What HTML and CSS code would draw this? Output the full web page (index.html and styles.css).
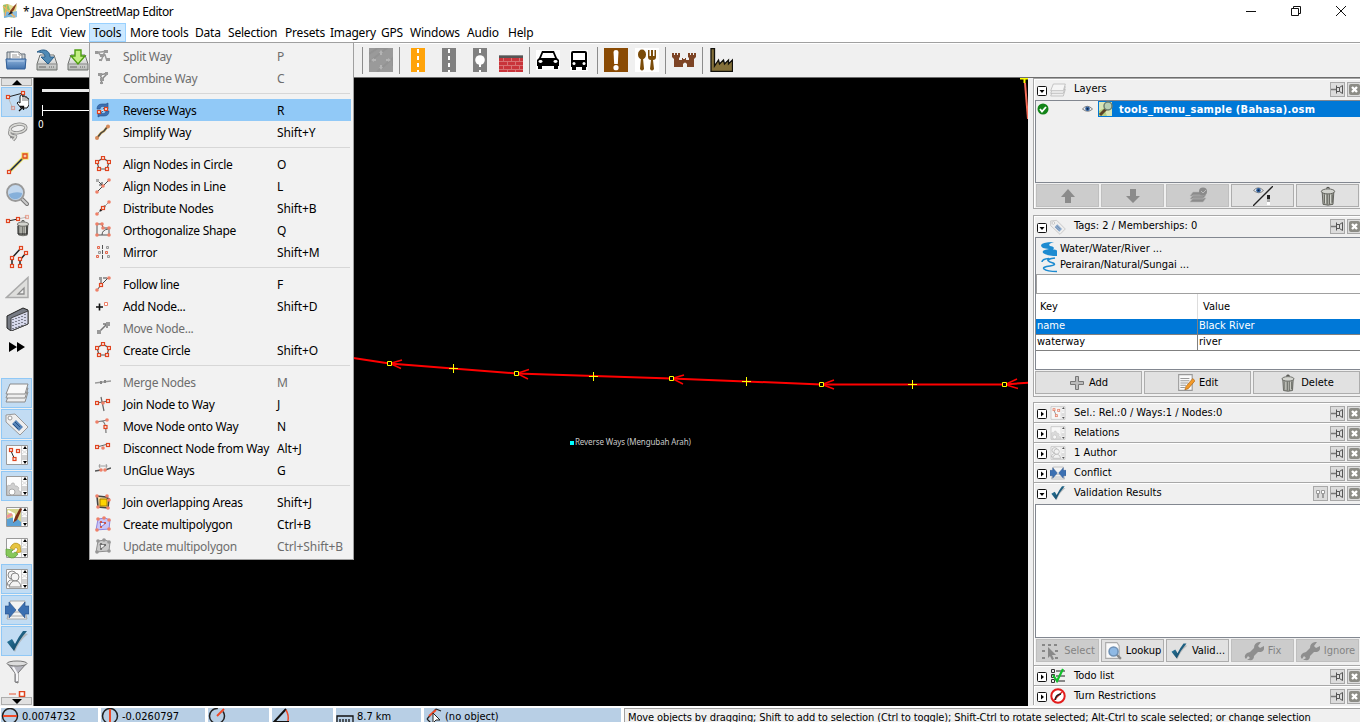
FILE: index.html
```html
<!DOCTYPE html>
<html lang="en">
<head>
<meta charset="utf-8">
<title>Java OpenStreetMap Editor</title>
<link rel="stylesheet" href="styles.css">
</head>
<body>
<svg class="defs" aria-hidden="true">
  <defs>
    <linearGradient id="steel" x1="0" y1="0" x2="0" y2="1"><stop offset="0" stop-color="#fafafa"/><stop offset="1" stop-color="#b4b7b4"/></linearGradient>
    <linearGradient id="folder" x1="0" y1="0" x2="0" y2="1"><stop offset="0" stop-color="#8fb3dc"/><stop offset="1" stop-color="#4272ad"/></linearGradient>
    <linearGradient id="check" x1="0" y1="0" x2="1" y2="1"><stop offset="0" stop-color="#2f86ad"/><stop offset="1" stop-color="#0b3450"/></linearGradient>
    <rect id="n" x="-1.5" y="-1.5" width="3" height="3" fill="#fbe9e4" stroke="#e0441f" stroke-width="1.2"/>
    <circle id="d" r="1.8" fill="#ee8068"/>
  </defs>
  <symbol id="josm" viewBox="0 0 16 16"><path d="M1 2l5-1 5 2 4-1-1 6 1 6-5 1-4-1-4 1z" fill="#e3dc94"/><path d="M1 2l5-1 2 6-6 3z" fill="#8dc36e"/><path d="M2 10l5-2 4 6-4 0-5 1z" fill="#77b3dc"/><path d="M10 9l5-1v6l-4 1z" fill="#8fbfe0"/><path d="M1 3l12 11M5 1l-2 12" stroke="#f3b15c" stroke-width="1.2"/><path d="M15 0l-3 7-3 3-1-2 4-5z" fill="#8a3d1c"/><path d="M9 8l-3 4 5-2z" fill="#22201e"/></symbol>
  <symbol id="open" viewBox="0 0 24 24"><path d="M3 4h7l2 2h9v14H3z" fill="#cfd2d4" stroke="#5e6a76"/><path d="M6 4h9l3 3v6H6z" fill="#fff" stroke="#7b8289"/><path d="M15 4v3h3M8 7h5M8 9h8" fill="none" stroke="#999"/><path d="M2 11h20l-1 10H3z" fill="url(#folder)" stroke="#315f98"/><path d="M4 13h16" stroke="#b6cfeb"/></symbol>
  <symbol id="disk" viewBox="0 0 24 24"><path d="M5 7h14l3 9v6H2v-6z" fill="url(#steel)" stroke="#6d706d"/><path d="M2 16h20" stroke="#888"/><path d="M4 19h7M14 19h1M16 19h1M18 19h1" stroke="#666"/></symbol>
  <symbol id="save" viewBox="0 0 24 24"><use href="#disk"/><path d="M2 4c6-4 13-2 13 5h4l-6 7-7-7h4c0-4-4-5-8-5z" fill="#4f8ab5" stroke="#285d88"/></symbol>
  <symbol id="download" viewBox="0 0 24 24"><use href="#disk"/><path d="M9 2h6v6h4l-7 8-7-8h4z" fill="#c4ef84" stroke="#4d9d10" stroke-width="1.4"/></symbol>
  <symbol id="grayroad" viewBox="0 0 24 24"><path fill="#9a9a9a" d="M0 0h24v24H0z"/><path d="M0 6l9-6h9L0 14M8 24L24 10v8" fill="none" stroke="#939393" stroke-width="2"/><path d="M12 2l2 3h-1v2h-2V5h-1zM12 22l2-3h-1v-2h-2v2h-1zM2 12l3-2v1h2v2H5v1zM22 12l-3-2v1h-2v2h2v1z" fill="#b4b4b4"/></symbol>
  <symbol id="motorway" viewBox="0 0 24 24"><path fill="#ffa30a" d="M5 0h14v24H5z"/><path d="M12 1v23" stroke="#fff" stroke-width="2" stroke-dasharray="4 3"/></symbol>
  <symbol id="road" viewBox="0 0 24 24"><path fill="#808080" d="M5 0h14v24H5z"/><path d="M12 1v23" stroke="#fff" stroke-width="2" stroke-dasharray="4 3"/></symbol>
  <symbol id="roadnode" viewBox="0 0 24 24"><use href="#road"/><circle cx="12" cy="12" r="4.8" fill="#fff"/></symbol>
  <symbol id="wall" viewBox="0 0 24 24"><path fill="#c9343a" d="M0 9h24v15H0z"/><path d="M0 7h24v3H0z" fill="#555"/><path d="M0 7.5h24" stroke="#888"/><path d="M0 13.5h24M0 17.5h24M0 21.500h24M4.500 10v3M12.500 10v3M20.500 10v3M8.500 14v3M16.500 14v3M4.500 18v3M12.500 18v3M20.500 18v3M8.500 22v2M16.500 22v2" stroke="#dc8280" stroke-width=".8"/></symbol>
  <symbol id="car" viewBox="0 0 24 24"><path fill="#fff" d="M0 2h24v20H0z"/><path d="M6 3h12l3 7 2 2v6h-1v3h-4v-3H6v3H2v-3H1v-6l2-2z"/><path d="M7 5h10l2 5H5z" fill="#fff"/><ellipse cx="4.500" cy="13.500" rx="2" ry="1.400" fill="#fff"/><ellipse cx="19.500" cy="13.500" rx="2" ry="1.400" fill="#fff"/></symbol>
  <symbol id="bus" viewBox="0 0 24 24"><path fill="#fff" d="M3 2h18v21H3z"/><path d="M6 3h12q2 0 2 2v14h-1v3h-4v-3H9v3H5v-3H4V5q0-2 2-2z"/><path d="M6 5h12v7H6z" fill="#fff"/><circle cx="7" cy="15.500" r="1.500" fill="#fff"/><circle cx="17" cy="15.500" r="1.500" fill="#fff"/></symbol>
  <symbol id="alert" viewBox="0 0 24 24"><path fill="#8a4b04" d="M0 0h24v24H0z"/><path d="M9.500 4q0-2 2.500-2t2.500 2L13.800 16h-3.600z" fill="#fff"/><circle cx="12" cy="19.700" r="2.600" fill="#fff"/></symbol>
  <symbol id="food" viewBox="0 0 24 24"><path fill="#fff" d="M0 0h24v24H0z"/><g fill="#7b4c0a"><ellipse cx="7" cy="6.500" rx="4" ry="5"/><path d="M6 10h2l1 11q-2 3-4 0z"/><path d="M13 2h1.500v6H16V2h2v6h1.500V2H21v7q0 3-3 3l1 9q-2 3-4 0l1-9q-3 0-3-3z"/></g></symbol>
  <symbol id="castle" viewBox="0 0 24 24"><path d="M0 5h2v2h1V5h2v2h1V5h2v4L7 10v2h3v-2h1v1h2v-1h1v2h3v-2l-1-1V5h2v2h1V5h2v2h1V5h2v4l-2 2v8h-7v-3q-2-3-4 0v3H2v-8L0 9z" fill="#7d4425"/></symbol>
  <symbol id="factory" viewBox="0 0 24 24"><path d="M2 .7h3.500V18l4-6 1 4 4-4 1 4 4-4v4l4-4v11.300H2z" fill="#84703a" stroke="#11100b" stroke-width="1.300"/></symbol>

  <symbol id="select" viewBox="0 0 24 24"><path d="M3 7l15-4" stroke="#222"/><path d="M3 7l5 12" stroke="#bbb"/><use href="#n" x="3" y="7"/><use href="#n" x="18" y="3"/><use href="#n" x="8" y="18" opacity=".4"/><path d="M15 7q0-2 1.500-2T18 7v-1q2-1 2 1 2-1 2 1 2 0 2 2v5l-2 3h-6l-4-5q1-2 3 0z" fill="#fff" stroke="#111"/><path d="M18 7v4M20 7v4M22 8v3" stroke="#444" stroke-width=".7"/><path d="M14 21l4-4m-3-.5h3.500V20" stroke="#111" stroke-width="1.300" fill="none"/></symbol>
  <symbol id="lasso" viewBox="0 0 24 24"><g fill="none" stroke="#888" stroke-width="3.200"><ellipse cx="13" cy="7.500" rx="8" ry="4.200" transform="rotate(-8 13 7.500)"/><path d="M5 10q-1 3 1 4t4 1-2 4M6 14l1 3"/></g><g fill="none" stroke="#d8d8d4" stroke-width="1.700"><ellipse cx="13" cy="7.500" rx="8" ry="4.200" transform="rotate(-8 13 7.500)"/><path d="M5 10q-1 3 1 4t4 1-2 4"/></g></symbol>
  <symbol id="draw" viewBox="0 0 24 24"><path d="M4 20L20 4" stroke="#eee04e" stroke-width="3.500" opacity=".8"/><path d="M4 20L20 4" stroke="#172348" stroke-width="1.600"/><path d="M16.500 .5h7v7h-7z" fill="#f2df4c"/><use href="#n" x="4" y="20"/><path d="M18 2h4v4h-4z" fill="#f8c7a2" stroke="#e04a22" stroke-width="1.300"/></symbol>
  <symbol id="zoomtool" viewBox="0 0 24 24"><path d="M16 15l6 6" stroke="#777" stroke-width="4" stroke-linecap="round"/><path d="M16 15l6 6" stroke="#ccc" stroke-width="2" stroke-linecap="round"/><circle cx="10.500" cy="9.500" r="8.500" fill="#c2d7ed" stroke="#999" stroke-width="1.800"/><path d="M4 11q7-3 13-1c0 8-13 8-13 1z" fill="#86b0da"/></symbol>
  <symbol id="trash" viewBox="0 0 24 24"><path d="M5 7h14l-1 15q-6 2-12 0z" fill="#a9aaa3" stroke="#4f504b"/><path d="M8 10v11M11 10v12M14 10v12M17 10v10" stroke="#4f504b"/><path d="M9 10v11M15 10v11" stroke="#e1e2dc"/><ellipse cx="12" cy="6.500" rx="8" ry="3" fill="#d3d4cf" stroke="#4f504b"/><path d="M10 3q2-3 4 0" fill="none" stroke="#4f504b" stroke-width="1.500"/></symbol>
  <symbol id="deltool" viewBox="0 0 24 24"><path d="M3 7l10-2" stroke="#222"/><path d="M13 5l9-2" stroke="#bbb"/><use href="#n" x="3" y="7"/><use href="#n" x="13" y="5"/><use href="#n" x="22" y="3" opacity=".4"/><svg x="9.500" y="5" width="17" height="18"><use href="#trash" width="17" height="18"/></svg><path d="M13 12v8h9v-8" fill="none" stroke="#222"/></symbol>
  <symbol id="parallel" viewBox="0 0 24 24"><path d="M7 21v-8l9-10M15 21v-6l6-7" stroke="#222" fill="none" stroke-width="1.500"/><use href="#n" x="7" y="21"/><use href="#n" x="7" y="13"/><use href="#n" x="16" y="3"/><use href="#n" x="15" y="21"/><use href="#n" x="15" y="14"/><use href="#n" x="21" y="8"/></symbol>
  <symbol id="triangle" viewBox="0 0 24 24"><path d="M23 1.500v20H1.500z" fill="#dededc" stroke="#aaa" stroke-width="1.500"/><path d="M19 12v6h-6z" fill="#f0f0f0" stroke="#8c8c8c" stroke-width="1.300"/></symbol>
  <symbol id="building" viewBox="0 0 24 24"><path d="M2 9L18 1l5 2v14L6 24l-4-3z" fill="#777b84" stroke="#222"/><path d="M6 11l17-7v13L6 24z" fill="#d6d8ea" stroke="#444"/><path d="M8 12v10M11 11v10M14 10v10M17 9v10M20 7v10" stroke="#34363e" stroke-width="1.100" stroke-dasharray="1 2"/></symbol>
  <symbol id="more" viewBox="0 0 24 24"><path d="M4 4l8 5-8 5zM12 4l8 5-8 5z"/></symbol>
  <symbol id="layers" viewBox="0 0 24 24"><g fill="#eee" stroke="#8b8b8b"><path d="M5 11h18l-3 10H1z"/><path d="M5 7h18l-3 10H1z"/><path d="M5 3h18l-3 10H1z" fill="#f8f8f8"/></g></symbol>
  <symbol id="tag" viewBox="0 0 24 24"><path d="M1 3l9-1 13 13-8 8L1 10z" fill="#eee" stroke="#999"/><circle cx="5" cy="6" r="2" fill="#fff" stroke="#999"/><path d="M11 8l7 7-4 4-7-7z" fill="#5684b8"/><path d="M10 10l5 5M8 12l5 5" stroke="#234f86"/></symbol>
  <symbol id="frame" viewBox="0 0 24 24"><path d="M1.500 2.500h21v19h-21z" fill="#fcfcfc" stroke="#9a9a9a"/><path d="M16.500 3v18" stroke="#ccc"/><path d="M17 12h5v5h-5z" fill="#d2d2d2"/><path d="M17 7l5 4m0-4l-5 4" stroke="#ddd"/><path d="M18 6l2-3 2 3zM18 18l2 3 2-3z"/></symbol>
  <symbol id="selection" viewBox="0 0 24 24"><use href="#frame"/><path d="M6 8l4 9" stroke="#222"/><use href="#n" x="6" y="7"/><use href="#n" x="13" y="8"/><use href="#n" x="9.500" y="16"/></symbol>
  <symbol id="relation" viewBox="0 0 24 24"><use href="#frame"/><path d="M2 12l2-1 1 1 2-3h2l1 3 2 0 2 2-1 2 3 2v3H2z" fill="#cfcfcf" stroke="#aaa" stroke-width=".6"/><circle cx="7" cy="18" r="3" fill="#fff" stroke="#aaa"/></symbol>
  <symbol id="mapstyle" viewBox="0 0 24 24"><use href="#frame"/><path d="M2 4h14v17H2z" fill="#d6d690"/><path d="M2 14l8-2 6 5v4H2z" fill="#5ba0d4"/><path d="M3 6l6 3v8" stroke="#fff" stroke-width="2" fill="none"/><path d="M2 12l5-3" stroke="#ef9494" stroke-width="3"/><path d="M17 4l-5 11-4 3 2-6 5-9z" fill="#793017"/></symbol>
  <symbol id="history" viewBox="0 0 24 24"><use href="#frame"/><path d="M5 12q4-8 10-3l1 7-5 1 2-4q-3-3-4 1z" fill="#e7c542" stroke="#b38d18" stroke-width=".7"/><path d="M13 18q-4 6-9 3l-3-2v-6l7 1-2 2q2 3 4 0z" fill="#86c85a" stroke="#579c30" stroke-width=".7"/></symbol>
  <symbol id="users" viewBox="0 0 24 24"><use href="#frame"/><g fill="#f4f4f4" stroke="#888"><circle cx="7" cy="8" r="4"/><path d="M2 18q1-6 6-5l4 5z"/><circle cx="10" cy="10" r="4"/><path d="M4 20q2-7 7-6 4 0 5 6z"/></g></symbol>
  <symbol id="conflict" viewBox="0 0 24 24"><path d="M5 3h15l-1 6 3 12H2l3-12z" fill="#f3f3f3" stroke="#aaa"/><path d="M5 14h14M4 18h16" stroke="#aaa"/><path d="M0 8h4V4l7 8-7 8v-4H0zM24 8h-4V4l-7 8 7 8v-4h4z" fill="#3c70b2" stroke="#274f87" stroke-width=".6"/></symbol>
  <symbol id="valid" viewBox="0 0 24 24"><path d="M4 15l6 8q4-11 13-18l-4-1q-6 5-9 12l-2-5z" fill="#aaa" opacity=".7"/><path d="M2 13l5-3 3 5Q14 7 18 2h4Q14 11 9 22z" fill="url(#check)"/></symbol>
  <symbol id="filter" viewBox="0 0 24 24"><path d="M3 4l7 9v9l3 1V13l8-9z" fill="#b7b7c0" stroke="#777"/><path d="M8 7l4 7v7" stroke="#f7f7f9" stroke-width="2" fill="none"/><ellipse cx="12" cy="3.500" rx="10" ry="2.500" fill="#ddd" stroke="#777"/></symbol>
  <symbol id="partial" viewBox="0 0 24 24"><path d="M4 3h7" stroke="#e88a75" stroke-width="1.500"/><path d="M14.500 .5h5v5h-5z" fill="#fff" stroke="#e0441f" stroke-width="1.500"/></symbol>

  <symbol id="m-split" viewBox="0 0 16 16"><path d="M1 4h5l6-1M3 4l3 4 4-1 2 6M10 3L6 13" stroke="#999" stroke-width="1.500" fill="none"/><path d="M0 3h3v3H0zM9 2h4v3H9zM5 6h4v3H5zM11 10h4v3h-4zM4 11h3v2H4z" fill="#999"/></symbol>
  <symbol id="m-combine" viewBox="0 0 16 16"><path d="M4 5l5-1 4-1M5 5l2 4-1 5M12 4L7 9" stroke="#888" stroke-width="1.500" fill="none"/><path d="M3 3h4v3H3zM10 2h3v3h-3zM5 8h4v3H5zM5 12h3v2H5z" fill="#999"/></symbol>
  <symbol id="m-reverse" viewBox="0 0 16 16"><path d="M2 7q0-5 5-5h4l2-1v6H8l2-2q-4-2-5 2zM14 9q0 5-5 5H5l-2 1V9h5l-2 2q4 2 5-2z" fill="#3c70b2" stroke="#274f87" stroke-width=".6"/><path d="M4 10l7-3" stroke="#eee"/><use href="#n" x="4" y="10"/><use href="#n" x="11" y="7"/></symbol>
  <symbol id="m-simplify" viewBox="0 0 16 16"><path d="M2 14L6 9l3-2 4-5" stroke="#e0b45e" stroke-width="2.400" fill="none"/><path d="M2 14L6 9l3-2 4-5" stroke="#444" stroke-width="1.500" fill="none"/><circle cx="2" cy="14" r="2" fill="#d68b5c"/><circle cx="13" cy="2.500" r="2" fill="#d68b5c"/></symbol>
  <symbol id="m-circle" viewBox="0 0 16 16"><path d="M8 2l6 4-2 7H4L2 6z" fill="none" stroke="#555" stroke-width="1.200"/><use href="#n" x="8" y="2"/><use href="#n" x="14" y="6"/><use href="#n" x="12" y="13"/><use href="#n" x="4" y="13"/><use href="#n" x="2" y="6"/></symbol>
  <symbol id="m-line" viewBox="0 0 16 16"><path d="M2 14L14 2M3 3l4 4M7 4v3H4" stroke="#444" fill="none"/><path d="M1 1h3v3H1z" fill="#aaa"/><use href="#d" x="2" y="14"/><use href="#d" x="8" y="8"/><use href="#d" x="14" y="2"/></symbol>
  <symbol id="m-dist" viewBox="0 0 16 16"><path d="M2 14L14 2" stroke="#999"/><path d="M5 11l5-5" stroke="#222" stroke-width="2"/><use href="#d" x="2" y="14"/><use href="#n" x="8" y="8"/><use href="#d" x="14" y="2"/></symbol>
  <symbol id="m-ortho" viewBox="0 0 16 16"><path d="M2 1v12h12V6H8L7 2H2M7 13q0-5 6-6" stroke="#555" fill="none"/><use href="#d" x="2" y="2"/><use href="#d" x="7" y="2"/><use href="#d" x="8" y="6"/><use href="#d" x="14" y="6"/><use href="#d" x="14" y="13"/><use href="#d" x="2" y="13"/></symbol>
  <symbol id="m-mirror" viewBox="0 0 16 16"><path d="M7.500 1v14" stroke="#555" stroke-dasharray="4 1"/><g fill="#ddd" stroke-width="1"><path d="M2.500 2.500h2v2h-2zM1.500 11.500h2v2h-2zM10.500 7.500h2v2h-2z" stroke="#e7654a"/><path d="M11.500 2.500h2v2h-2zM3.500 7.500h2v2h-2zM12.500 11.500h2v2h-2z" stroke="#999"/></g></symbol>
  <symbol id="m-follow" viewBox="0 0 16 16"><path d="M2 14l4-5V2M6 9l7-7M8 2h4" stroke="#444" fill="none"/><path d="M4 1h3v3H4z" fill="#999"/><use href="#d" x="2" y="14"/><use href="#n" x="6" y="9"/><use href="#d" x="14" y="2"/></symbol>
  <symbol id="m-add" viewBox="0 0 16 16"><path d="M1 9h7M4.500 5.500v7" stroke="#111" stroke-width="1.600"/><path d="M9.500 4.500h3v3h-3z" fill="#fff" stroke="#ee8068"/></symbol>
  <symbol id="m-move" viewBox="0 0 16 16"><path d="M4 12l7-7M8 4h4v4" stroke="#777" stroke-width="1.500" fill="none"/><path d="M2 10h4v4H2zM11 2h4v4h-4z" fill="#999"/></symbol>
  <symbol id="m-merge" viewBox="0 0 16 16"><path d="M0 9l16-2" stroke="#999" stroke-width="1.400"/><path d="M5 7h2v3H5zM9 6h2v3H9z" fill="#888"/></symbol>
  <symbol id="m-join" viewBox="0 0 16 16"><path d="M2 7l11-2M6 1l3 14" stroke="#666" stroke-width="1.200"/><use href="#d" x="8" y="7"/><use href="#n" x="2" y="7"/><use href="#n" x="13" y="5"/></symbol>
  <symbol id="m-onto" viewBox="0 0 16 16"><path d="M1 4l12-2M7 3q4 1 4 12" stroke="#777" stroke-width="1.200" fill="none"/><use href="#d" x="2" y="4"/><use href="#d" x="12" y="2"/><use href="#n" x="10.500" y="9"/></symbol>
  <symbol id="m-disc" viewBox="0 0 16 16"><path d="M2 7l11-3" stroke="#666"/><use href="#n" x="2" y="7"/><use href="#d" x="8" y="8"/><use href="#n" x="13" y="5"/></symbol>
  <symbol id="m-unglue" viewBox="0 0 16 16"><path d="M0 9l6-1M10 8l6-2" stroke="#555" stroke-width="1.400"/><path d="M4 4h8M5 2L4 4l1 2M11 2l1 2-1 2" stroke="#888" fill="none" stroke-width=".8"/><use href="#d" x="6" y="8"/><use href="#d" x="10" y="8"/></symbol>
  <symbol id="m-overlap" viewBox="0 0 16 16"><path d="M2 2l9 1 3 2-1 9-10-1z" fill="#f2d9a4" stroke="#444" stroke-width="1.600"/><path d="M5 5h7v7H5z" fill="#ffd400" stroke="#a67b00"/><use href="#d" x="2" y="2"/><use href="#d" x="12" y="2"/><use href="#d" x="14" y="6"/><use href="#d" x="13" y="14"/><use href="#d" x="3" y="13"/></symbol>
  <symbol id="m-multi" viewBox="0 0 16 16"><path d="M3 3l7-1 5 2-1 9-13 1z" fill="#c9c4f5" stroke="#8f86e0"/><path d="M5 6l6 1-5 4z" fill="#efeeff" stroke="#776ec8"/><use href="#d" x="3" y="3"/><use href="#d" x="9" y="2"/><use href="#d" x="14" y="4"/><use href="#d" x="14" y="13"/><use href="#d" x="2" y="14"/><g fill="#e0441f"><circle cx="6" cy="6" r="1"/><circle cx="10" cy="7" r="1"/><circle cx="6" cy="11" r="1"/></g></symbol>

  <symbol id="pin" viewBox="0 0 13 13"><path d="M0 6.500h5" stroke="#777" stroke-width="1.500"/><path d="M5.500 2.500v8M5.500 4.500h3v4h-3M8.500 4.500l3-2v8l-3-2" fill="#ddd" stroke="#555"/></symbol>
  <symbol id="close" viewBox="0 0 13 13"><rect x="1" y="1" width="11" height="11" rx="2" fill="#8c8c86"/><path d="M4 4l5 5m0-5l-5 5" stroke="#fff" stroke-width="2.400"/></symbol>
  <symbol id="unfold" viewBox="0 0 12 12"><rect x="1.500" y="1.500" width="9" height="9" rx="1" fill="#fff" stroke="#111"/><path d="M3.500 5h5L6 8z"/></symbol>
  <symbol id="fold" viewBox="0 0 12 12"><rect x="1.500" y="1.500" width="9" height="9" rx="1" fill="#fff" stroke="#111"/><path d="M5 3.500v5L8 6z"/></symbol>
  <symbol id="eye" viewBox="0 0 12 10"><path d="M.5 5q5-6 11 0-5 5-11 0z" fill="#e7edf4" stroke="#777"/><circle cx="6" cy="4.800" r="2.500" fill="#2f5f9e"/><circle cx="6" cy="4.800" r="1" fill="#0b1f3c"/></symbol>
  <symbol id="ok" viewBox="0 0 12 12"><circle cx="6" cy="6" r="5.500" fill="#128418"/><path d="M3 6l2 2.500L9 4" stroke="#fff" stroke-width="1.800" fill="none"/></symbol>
  <symbol id="osmlayer" viewBox="0 0 16 16"><path d="M1 1h13v14H1z" fill="#d9e5b5"/><path d="M1 10l5-3 3 8H1z" fill="#b5cf82"/><path d="M8 8l-6 6" stroke="#5c4527" stroke-width="3"/><circle cx="10" cy="5" r="4" fill="#b7cfb5" stroke="#6d7f70" stroke-width="1.500"/></symbol>
  <symbol id="up" viewBox="0 0 16 16"><path d="M8 1l7 8h-4v6H5V9H1z" fill="#8b8b8b"/></symbol>
  <symbol id="down" viewBox="0 0 16 16"><path d="M8 15L1 8h4V1h6v7h4z" fill="#8b8b8b"/></symbol>
  <symbol id="merge" viewBox="0 0 20 18"><path d="M5 11h13l-3 4H2zM5 8h13l-3 4H2zM5 5h13l-3 4H2z" fill="#8b8b8b" stroke="#b5b5b5" stroke-width=".6"/><circle cx="15" cy="4.500" r="4" fill="#8b8b8b"/><path d="M13 4l2 2 3-3" fill="none" stroke="#bbb"/></symbol>
  <symbol id="opacity" viewBox="0 0 20 20"><path d="M0 20L20 0" stroke="#222" stroke-width="1.300"/><svg x="0" y="0" width="11" height="9"><use href="#eye"/></svg><path d="M14 9h3v4h-3z" fill="#222"/><path d="M14 13h3v3h-3z" fill="#aaa"/><path d="M14 16h3v3h-3z" fill="#fff"/></symbol>
  <symbol id="riverfull" viewBox="0 0 16 16"><path d="M13 1Q0 1 0 4.500Q0 7.500 8 8Q0 9 2 12Q6 15 16 15V9.500Q14 8 12 8.500Q15 6 9 5Q6 3 13 1z" fill="#1d8bd1"/></symbol>
  <symbol id="riverline" viewBox="0 0 16 16"><path d="M14 1Q6 2 7 3.500Q8 5 12 6Q16 8 9 9Q1 10 3 12Q6 14.500 16 14.500M8 1.500Q1 2 1 5" fill="none" stroke="#1d8bd1" stroke-width="1.600"/></symbol>
  <symbol id="plus" viewBox="0 0 16 16"><path d="M6.500 1.500h3v5h5v3h-5v5h-3v-5h-5v-3h5z" fill="#bbb" stroke="#777"/></symbol>
  <symbol id="edit" viewBox="0 0 16 16"><path d="M1.500 .5h12v14h-12z" fill="#fafafa" stroke="#999"/><path d="M3 4h8M3 6h8M3 8h7M3 10h5M3 12h4" stroke="#999"/><path d="M14 4l2 2-6 7-3 1 1-3z" fill="#f39b2a" stroke="#a86010" stroke-width=".6"/></symbol>
  <symbol id="prefs" viewBox="0 0 13 13"><path d="M2.500 3.500h3v3h-3zM7.500 3.500h3v3h-3z" fill="#fff" stroke="#999"/><path d="M4 7v4M9 7v4" stroke="#888" stroke-width="1.500"/></symbol>
  <symbol id="pick" viewBox="0 0 20 18"><path d="M2 3h3M8 3h3M14 3h3M2 9h3M2 16h3M15 16h3M15 9h3" stroke="#888" stroke-width="2" fill="none"/><path d="M8 5l8 8-4 0 2 4-2 1-2-4-2 2z" fill="#888"/></symbol>
  <symbol id="lookup" viewBox="0 0 16 16"><path d="M1.500.5h10l2 3v11h-12z" fill="#fafafa" stroke="#aaa"/><path d="M11 11l4 4" stroke="#888" stroke-width="2"/><circle cx="8.500" cy="8.500" r="4" fill="#8fb9e4" stroke="#6f91b5" stroke-width="1.400"/></symbol>
  <symbol id="wrench" viewBox="0 0 20 20"><path d="M2 18q-3-3 1-6l3-1 4-4q0-5 5-6l2 0-3 4 2 2 4-2q1 5-3 6h-3l-4 4q0 5-5 4h-2l3-2-2-2z" fill="#8e8e8e"/></symbol>
  <symbol id="todo" viewBox="0 0 16 16"><path d="M1.500 1.500h3v3h-3zM1.500 6.500h3v3h-3zM1.500 11.500h3v3h-3z" fill="#eee" stroke="#333"/><path d="M6 3h9M6 8h9M6 13h9" stroke="#666" stroke-width="1.500"/><path d="M3 7l4 6 6-12" stroke="#12c02c" stroke-width="2.200" fill="none"/></symbol>
  <symbol id="turn" viewBox="0 0 16 16"><circle cx="8" cy="8" r="6.700" fill="#fff" stroke="#e31c1c" stroke-width="2"/><path d="M4 12l8-8" stroke="#e31c1c" stroke-width="1.500"/><path d="M5.500 12Q5 7 11 6" stroke="#222" stroke-width="1.400" fill="none"/></symbol>
</svg>

<header class="titlebar">
  <svg class="i16"><use href="#josm"/></svg><span class="title">* Java OpenStreetMap Editor</span>
  <svg class="wctl" viewBox="0 0 110 20"><g fill="none" stroke="#111"><path d="M6 10.500h10M51.500 7.500h7v7h-7zM53.500 7.500v-2h7v7h-2M96 5l10 10M106 5L96 15"/></g></svg>
</header>
<nav class="menubar">
  <span>File</span><span>Edit</span><span>View</span><span class="active">Tools</span><span>More tools</span><span>Data</span><span>Selection</span><span>Presets</span><span>Imagery</span><span>GPS</span><span>Windows</span><span>Audio</span><span>Help</span>
</nav>
<div class="toolbar">
  <div class="tgroup files"><svg><use href="#open"/></svg><svg><use href="#save"/></svg><svg><use href="#download"/></svg></div>
  <div class="tgroup"><svg><use href="#grayroad"/></svg></div>
  <div class="tgroup"><svg><use href="#motorway"/></svg><svg><use href="#road"/></svg><svg><use href="#roadnode"/></svg><svg><use href="#wall"/></svg></div>
  <div class="tgroup"><svg><use href="#car"/></svg><svg><use href="#bus"/></svg></div>
  <div class="tgroup"><svg><use href="#alert"/></svg><svg><use href="#food"/></svg></div>
  <div class="tgroup"><svg><use href="#castle"/></svg></div>
  <div class="tgroup"><svg><use href="#factory"/></svg></div>
</div>

<main class="work">
  <aside class="side">
    <div class="scroll"><svg viewBox="0 0 10 5"><path d="M5 0l5 5H0z"/></svg></div>
    <div class="tools">
      <i class="on"><svg><use href="#select"/></svg></i><i><svg><use href="#lasso"/></svg></i><i><svg><use href="#draw"/></svg></i><i><svg><use href="#zoomtool"/></svg></i><i><svg><use href="#deltool"/></svg></i><i><svg><use href="#parallel"/></svg></i><i><svg><use href="#triangle"/></svg></i><i><svg><use href="#building"/></svg></i><i><svg><use href="#more"/></svg></i>
    </div>
    <div class="tools dialogs">
      <i class="on"><svg><use href="#layers"/></svg></i><i class="on"><svg><use href="#tag"/></svg></i><i class="on"><svg><use href="#selection"/></svg></i><i class="on"><svg><use href="#relation"/></svg></i><i><svg><use href="#mapstyle"/></svg></i><i><svg><use href="#history"/></svg></i><i class="on"><svg><use href="#users"/></svg></i><i class="on"><svg><use href="#conflict"/></svg></i><i class="on"><svg><use href="#valid"/></svg></i><i><svg><use href="#filter"/></svg></i><i><svg><use href="#partial"/></svg></i>
    </div>
    <div class="scroll"><svg viewBox="0 0 10 5"><path d="M5 5l5-5H0z"/></svg></div>
  </aside>

  <svg class="map" viewBox="34 78 994 628">
    <path d="M42 90.500h60" stroke="#e9e9e9" stroke-width="3"/>
    <path d="M42.500 105v11M42 110.500h60" stroke="#fff"/>
    <text x="38" y="128" class="scale">0</text>
    <path d="M350 357.500L389.500 363.500 516.500 373.500 671.500 378.500 821.500 384.500H1004.500L1030 382.500" fill="none" stroke="#f00" stroke-width="2"/>
    <g fill="none" stroke="#f00" stroke-width="1.500">
      <path d="M402 360l-12 3.500 11 5M529 369.500l-12 4 11 5.500M684 375l-12 3.500 11 5.500M834 380l-12 4.500 12 4.500M1017 379l-12 5.500 13 4"/>
    </g>
    <g fill="#000" stroke="#ff0">
      <path d="M387.500 361.500h4v4h-4zM514.500 371.500h4v4h-4zM669.500 376.500h4v4h-4zM819.500 382.500h4v4h-4zM1002.500 382.500h4v4h-4z"/>
      <path d="M449 368.500h9M453.500 364v9M589 376.500h9M593.500 372v9M742 381.500h9M746.500 377v9M908 384.500h9M912.500 380v9"/>
      <path d="M1020 78.500h8M1024.500 78v5" stroke-width="2"/>
    </g>
    <path d="M1025 83l3 36" stroke="#f56d58" stroke-width="2"/>
    <path d="M570 441h4v4h-4z" fill="#0ff"/>
    <text x="575" y="445" class="label" textLength="116">Reverse Ways (Mengubah Arah)</text>
  </svg>

  <aside class="panels">
    <section class="panel layers">
      <header><svg class="tg"><use href="#unfold"/></svg><svg class="i16 dim"><use href="#layers"/></svg><b>Layers</b><svg class="hb"><use href="#pin"/></svg><svg class="hb"><use href="#close"/></svg></header>
      <div class="list">
        <div class="layer"><svg class="okic"><use href="#ok"/></svg><svg class="eyeic"><use href="#eye"/></svg><div class="lname"><svg class="i16"><use href="#osmlayer"/></svg><span>tools_menu_sample (Bahasa).osm</span></div></div>
      </div>
      <div class="btns five"><button class="off"><svg class="i16"><use href="#up"/></svg></button><button class="off"><svg class="i16"><use href="#down"/></svg></button><button class="off"><svg class="i20"><use href="#merge"/></svg></button><button><svg class="i20"><use href="#opacity"/></svg></button><button><svg class="i20"><use href="#trash"/></svg></button></div>
    </section>

    <section class="panel tags">
      <header><svg class="tg"><use href="#unfold"/></svg><svg class="i16 dim"><use href="#tag"/></svg><b>Tags: 2 / Memberships: 0</b><svg class="hb"><use href="#pin"/></svg><svg class="hb"><use href="#close"/></svg></header>
      <div class="tagbox">
        <div class="preset"><svg class="i16"><use href="#riverfull"/></svg><span>Water/Water/River ...</span></div>
        <div class="preset"><svg class="i16"><use href="#riverline"/></svg><span>Perairan/Natural/Sungai ...</span></div>
        <div class="filter"></div>
        <div class="row head"><span>Key</span><span>Value</span></div>
        <div class="row sel"><span>name</span><span>Black River</span></div>
        <div class="row"><span>waterway</span><span>river</span></div>
      </div>
      <div class="btns three"><button><svg class="i16"><use href="#plus"/></svg>Add</button><button><svg class="i18"><use href="#edit"/></svg>Edit</button><button><svg class="i18"><use href="#trash"/></svg>Delete</button></div>
    </section>

    <div class="stack">
      <section class="panel"><header><svg class="tg"><use href="#fold"/></svg><svg class="i16 dim"><use href="#selection"/></svg><b>Sel.: Rel.:0 / Ways:1 / Nodes:0</b><svg class="hb"><use href="#pin"/></svg><svg class="hb"><use href="#close"/></svg></header></section>
      <section class="panel"><header><svg class="tg"><use href="#fold"/></svg><svg class="i16 dim"><use href="#relation"/></svg><b>Relations</b><svg class="hb"><use href="#pin"/></svg><svg class="hb"><use href="#close"/></svg></header></section>
      <section class="panel"><header><svg class="tg"><use href="#fold"/></svg><svg class="i16 dim"><use href="#users"/></svg><b>1 Author</b><svg class="hb"><use href="#pin"/></svg><svg class="hb"><use href="#close"/></svg></header></section>
      <section class="panel"><header><svg class="tg"><use href="#fold"/></svg><svg class="i16"><use href="#conflict"/></svg><b>Conflict</b><svg class="hb"><use href="#pin"/></svg><svg class="hb"><use href="#close"/></svg></header></section>
      <section class="panel validation">
        <header><svg class="tg"><use href="#unfold"/></svg><svg class="i16"><use href="#valid"/></svg><b>Validation Results</b><svg class="hb"><use href="#prefs"/></svg><svg class="hb"><use href="#pin"/></svg><svg class="hb"><use href="#close"/></svg></header>
        <div class="results"></div>
        <div class="btns five"><button class="off"><svg class="i20"><use href="#pick"/></svg>Select</button><button><svg class="i18"><use href="#lookup"/></svg>Lookup</button><button><svg class="i18"><use href="#valid"/></svg>Valid...</button><button class="off"><svg class="i20"><use href="#wrench"/></svg>Fix</button><button class="off"><svg class="i20"><use href="#wrench"/></svg>Ignore</button></div>
      </section>
      <section class="panel"><header><svg class="tg"><use href="#fold"/></svg><svg class="i16"><use href="#todo"/></svg><b>Todo list</b><svg class="hb"><use href="#pin"/></svg><svg class="hb"><use href="#close"/></svg></header></section>
      <section class="panel"><header><svg class="tg"><use href="#fold"/></svg><svg class="i16"><use href="#turn"/></svg><b>Turn Restrictions</b><svg class="hb"><use href="#pin"/></svg><svg class="hb"><use href="#close"/></svg></header></section>
    </div>
  </aside>
</main>

<footer class="status">
  <span><svg viewBox="0 0 18 16"><circle cx="9" cy="9" r="7.500" fill="none" stroke="#222" stroke-width="1.500"/><path d="M2 9h14" stroke="#f04a28" stroke-width="2"/></svg>0.0074732</span>
  <span><svg viewBox="0 0 18 16"><circle cx="9" cy="9" r="7.500" fill="none" stroke="#222" stroke-width="1.500"/><path d="M9 2v14" stroke="#f04a28" stroke-width="2"/></svg>-0.0260797</span>
  <span><svg viewBox="0 0 18 16"><circle cx="9" cy="9" r="7.500" fill="none" stroke="#222" stroke-width="1.500" stroke-dasharray="36 6"/><path d="M9 9l7-7" stroke="#f04a28" stroke-width="2"/></svg></span>
  <span><svg viewBox="0 0 18 16"><path d="M14 2L2 15h15" fill="none" stroke="#111" stroke-width="2"/><path d="M14 3q3 5 2 11" fill="none" stroke="#f04a28" stroke-width="1.500"/></svg></span>
  <span><svg viewBox="0 0 18 16"><path d="M1 16V9h16v7M4 12v4M7 12v4M10 12v4M13 12v4" fill="none" stroke="#111" stroke-width="1.300"/></svg>8.7 km</span>
  <span><svg viewBox="0 0 18 16"><path d="M3 12l9-10M3 12l6 6M12 2l5 2" fill="none" stroke="#222" stroke-width="1.200"/><path d="M5 9l7-6" stroke="#f04a28" stroke-width="2"/><path d="M9 6v10l3-3h4z" fill="#fff" stroke="#222"/></svg>(no object)</span>
  <em>Move objects by dragging; Shift to add to selection (Ctrl to toggle); Shift-Ctrl to rotate selected; Alt-Ctrl to scale selected; or change selection</em>
</footer>

<ul class="popup">
  <li class="off"><svg><use href="#m-split"/></svg><span>Split Way</span><kbd>P</kbd></li>
  <li class="off"><svg><use href="#m-combine"/></svg><span>Combine Way</span><kbd>C</kbd></li>
  <li class="sep"></li>
  <li class="hot"><svg><use href="#m-reverse"/></svg><span>Reverse Ways</span><kbd>R</kbd></li>
  <li><svg><use href="#m-simplify"/></svg><span>Simplify Way</span><kbd>Shift+Y</kbd></li>
  <li class="sep"></li>
  <li><svg><use href="#m-circle"/></svg><span>Align Nodes in Circle</span><kbd>O</kbd></li>
  <li><svg><use href="#m-line"/></svg><span>Align Nodes in Line</span><kbd>L</kbd></li>
  <li><svg><use href="#m-dist"/></svg><span>Distribute Nodes</span><kbd>Shift+B</kbd></li>
  <li><svg><use href="#m-ortho"/></svg><span>Orthogonalize Shape</span><kbd>Q</kbd></li>
  <li><svg><use href="#m-mirror"/></svg><span>Mirror</span><kbd>Shift+M</kbd></li>
  <li class="sep"></li>
  <li><svg><use href="#m-follow"/></svg><span>Follow line</span><kbd>F</kbd></li>
  <li><svg><use href="#m-add"/></svg><span>Add Node...</span><kbd>Shift+D</kbd></li>
  <li class="off"><svg><use href="#m-move"/></svg><span>Move Node...</span></li>
  <li><svg><use href="#m-circle"/></svg><span>Create Circle</span><kbd>Shift+O</kbd></li>
  <li class="sep"></li>
  <li class="off"><svg><use href="#m-merge"/></svg><span>Merge Nodes</span><kbd>M</kbd></li>
  <li><svg><use href="#m-join"/></svg><span>Join Node to Way</span><kbd>J</kbd></li>
  <li><svg><use href="#m-onto"/></svg><span>Move Node onto Way</span><kbd>N</kbd></li>
  <li><svg><use href="#m-disc"/></svg><span>Disconnect Node from Way</span><kbd>Alt+J</kbd></li>
  <li><svg><use href="#m-unglue"/></svg><span>UnGlue Ways</span><kbd>G</kbd></li>
  <li class="sep"></li>
  <li><svg><use href="#m-overlap"/></svg><span>Join overlapping Areas</span><kbd>Shift+J</kbd></li>
  <li><svg><use href="#m-multi"/></svg><span>Create multipolygon</span><kbd>Ctrl+B</kbd></li>
  <li class="off gray"><svg><use href="#m-multi"/></svg><span>Update multipolygon</span><kbd>Ctrl+Shift+B</kbd></li>
</ul>
</body>
</html>
```
FILE: styles.css
```css
* { box-sizing: border-box; }
body {
  margin: 0; width: 1360px; height: 722px; overflow: hidden;
  display: flex; flex-direction: column; position: relative;
  background: #f0f0f0; color: #000;
  font: 11px/16px "DejaVu Sans Condensed", "DejaVu Sans", sans-serif;
  font-stretch: condensed;
}
svg { display: block; flex: none; }
.defs { position: absolute; width: 0; height: 0; }
.i16 { width: 16px; height: 16px; }
.i18 { width: 18px; height: 18px; }
.i20 { width: 20px; height: 20px; }
.dim { opacity: .65; }

/* window chrome */
.titlebar, .menubar, .popup { font-family: "Noto Sans", "Open Sans", sans-serif; font-size: 12px; font-stretch: normal; }
.titlebar { flex: none; height: 22px; background: #fff; display: flex; align-items: center; padding-left: 2px; gap: 5px; }
.title { flex: 1; letter-spacing: -.43px; padding-top: 1px; }
.wctl { width: 110px; height: 20px; margin-right: 10px; }
.menubar {
  flex: none; height: 20px; background: #fff; padding-top: 1px; line-height: 20px; letter-spacing: -.2px;
  display: grid; grid-template-columns: 27px 29px 33px 37px 65px 33px 57px 45px 51px 29px 57px 41px 40px;
}
.menubar span { padding-left: 4px; white-space: nowrap; height: 19px; }
.menubar .active { background: #cce8ff; outline: 1px solid #99d1ff; outline-offset: -1px; }
.toolbar { flex: none; height: 36px; border-top: 1px solid #a0a0a0; border-bottom: 1px solid #6e6e6e; display: flex; padding-left: 4px; box-shadow: inset 0 1px #fff; }
.tgroup { display: flex; gap: 7px; align-items: center; height: 34px; }
.tgroup svg { width: 24px; height: 24px; }
.tgroup + .tgroup::before { content: ""; width: 1px; height: 27px; background: #8c8c8c; margin: 0 -1px 0 6px; }
.tgroup.files { width: 352px; }

.work { flex: none; height: 628px; display: flex; }

/* tool strip */
.side { flex: none; width: 34px; height: 628px; border-right: 1px solid #707070; padding: 0 0 0 1px; display: flex; flex-direction: column; overflow: hidden; }
.scroll { flex: none; height: 8px; width: 31px; background: #e1e1e1; border: 1px solid #adadad; display: grid; place-items: center; }
.scroll svg { width: 10px; height: 5px; }
.tools { margin-top: 1px; display: flex; flex-direction: column; gap: 1px; }
.tools i { flex: none; width: 31px; height: 30px; display: grid; place-items: center; border: 1px solid transparent; }
.tools i.on { background: #c2dcf3; border-color: #90c8f6; }
.tools svg { width: 24px; height: 24px; }
.dialogs { margin-top: 13px; height: 319px; overflow: hidden; }

.map { width: 994px; height: 628px; background: #000; }
.map .scale { fill: #fff; font: 10px "DejaVu Sans Condensed", "DejaVu Sans", sans-serif; }
.map .label { fill: #c8c8c8; font: 8px "Noto Sans", sans-serif; }

/* dialogs */
.panels { width: 332px; height: 628px; padding: 0 0 0 5px; overflow: hidden; }
.panel { border: 1px solid #a8a8a8; border-width: 1px 0 0 1px; box-shadow: inset 1px 1px #fff; padding-left: 1px; width: 327px; }
.panel header { display: flex; align-items: center; height: 20px; padding-left: 1px; }
.panel b { font-weight: normal; flex: 1; padding-left: 8px; white-space: nowrap; }
.tg { width: 12px; height: 12px; margin: 2px 2px 0 0; }
.hb { width: 15px; height: 15px; border: 1px solid #a8a8a8; background: #dcdcdc; margin-left: 2px; }
.hb:last-child { margin-right: -2px; }
.panel.layers { height: 131px; border-bottom-width: 1px; }
.layers header, .tags header { height: 21px; }
.layers b, .tags b { padding-bottom: 2px; }
.list { height: 83px; border: 1px solid #828790; border-right: 0; }
.layer { display: flex; align-items: center; height: 16px; }
.okic { width: 12px; height: 12px; margin-left: 1px; }
.eyeic { width: 11px; height: 10px; margin: 0 5px 0 33px; }
.lname { flex: 1; background: #0078d7; color: #fff; display: flex; gap: 5px; font-weight: bold; height: 16px; white-space: nowrap; letter-spacing: .26px; line-height: 17px; }
.btns { display: grid; gap: 2px; padding: 1px 0 0 0; height: 24px; }
.five { grid-template-columns: repeat(5, 63px); padding-left: 1px; }
.three { grid-template-columns: repeat(3, 107px); }
.btns button { font: inherit; color: #000; height: 23px; border: 1px solid #adadad; background: #e1e1e1; padding: 0; display: flex; align-items: center; justify-content: center; gap: 4px; white-space: nowrap; }
.btns .off { background: #ccc; border-color: #bfbfbf; color: #838383; }
.panel.tags { margin-top: 6px; height: 182px; border-bottom-width: 1px; }
.tagbox { height: 133px; border: 1px solid #828790; border-right: 0; background: #fff; }
.preset { height: 16px; background: #f0f0f0; display: flex; align-items: center; gap: 3px; padding-left: 5px; letter-spacing: -.06px; }
.preset:first-child { height: 19px; padding-top: 3px; }
.filter { height: 20px; border: 1px solid #a0a0a0; border-right: 0; box-shadow: 0 -1px #f0f0f0; margin-top: 1px; }
.row { height: 16px; display: grid; grid-template-columns: 161px 1fr; border-bottom: 1px solid #808080; line-height: 14px; }
.row span { padding-left: 1px; }
.row span + span { border-left: 1px solid #808080; }
.row.head { height: 25px; border: 0; line-height: 26px; }
.row.head span { padding-left: 4px; }
.row.head span + span { border-color: #ddd; padding-left: 5px; }
.row.sel { background: #0078d7; color: #fff; }
.stack { margin-top: 5px; }
.stack .panel { height: 20px; }
.stack .panel.validation { height: 183px; }
.results { height: 134px; margin-top: 1px; background: #fff; border: 1px solid #828790; border-right: 0; }

.status { flex: none; height: 16px; border-top: 2px solid #fff; background: #fff; display: grid; grid-template-columns: 97px 104px 61px 61px 85px 197px 1fr; gap: 3px; padding-left: 1px; font-size: 11px; line-height: 18px; }
.status span { background: #b8cfe5; height: 14px; display: flex; gap: 3px; white-space: nowrap; overflow: hidden; }
.status svg { width: 18px; height: 16px; margin-top: -1px; }
.status em { font-style: normal; white-space: nowrap; background: #f0f0f0; border: 1px solid #a0a0a0; border-width: 1px 0 0 1px; padding-left: 3px; height: 16px; line-height: 17px; letter-spacing: -.125px; }

/* drop-down */
.popup { position: absolute; left: 89px; top: 42px; width: 265px; height: 518px; margin: 0; padding: 2px; list-style: none; background: #f2f2f2; border: 1px solid #a0a0a0; letter-spacing: -.3px; }
.popup li { height: 22px; display: grid; grid-template-columns: 28px 154px 1fr; align-items: center; padding-left: 3px; white-space: nowrap; }
.popup svg { width: 16px; height: 16px; }
.popup span, .popup kbd { padding-top: 2px; }
.popup kbd { font: inherit; letter-spacing: -.1px; }
.popup li.sep { height: 10px; display: block; padding: 4px 1px 0 28px; }
.popup .sep::before { content: ""; display: block; height: 1px; background: #d7d7d7; }
.popup .off { color: #6d6d6d; }
.popup .gray svg { filter: grayscale(1); }
.popup .hot { background: #91c9f7; }
```
